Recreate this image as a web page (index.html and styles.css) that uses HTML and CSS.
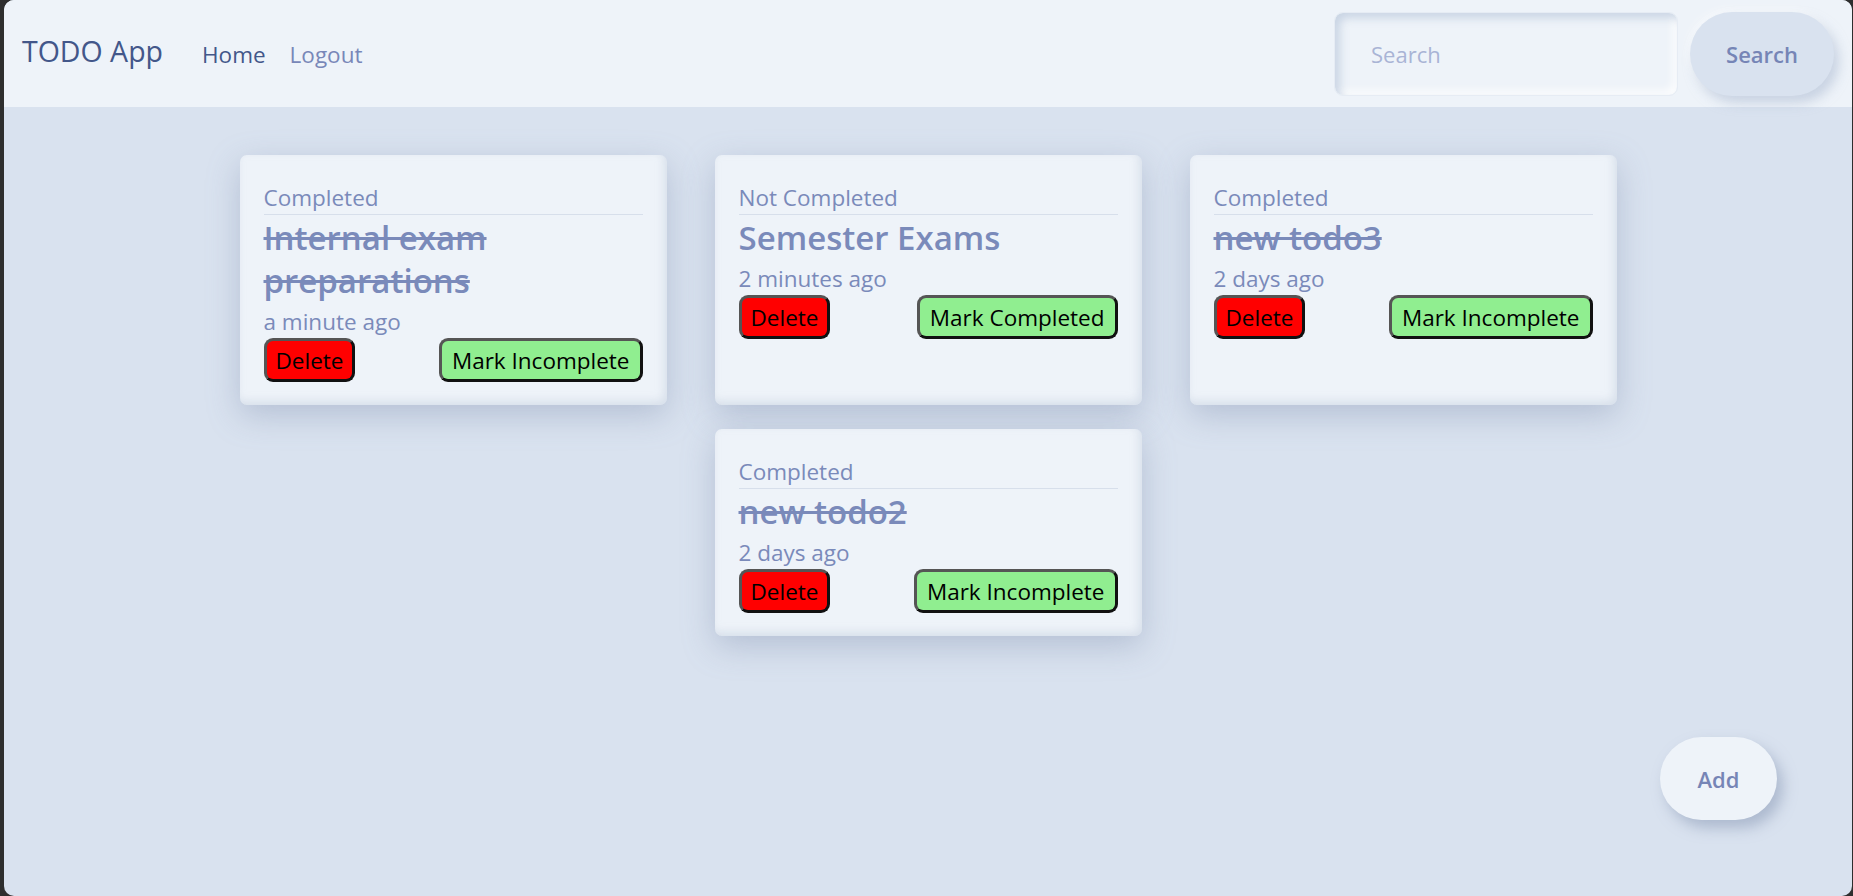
FILE: index.html
```html
<!DOCTYPE html>
<html lang="en">
<head>
<meta charset="utf-8">
<title>TODO App</title>
<link rel="stylesheet" href="styles.css">
</head>
<body>
<div class="window">
  <nav class="navbar">
    <a class="brand" href="#">TODO App</a>
    <div class="nav-links">
      <a class="nav-link active" href="#">Home</a>
      <a class="nav-link" href="#">Logout</a>
    </div>
    <form class="search">
      <input class="search-input" type="text" placeholder="Search">
      <button class="search-btn" type="button">Search</button>
    </form>
  </nav>
  <main class="todos">
    <div class="card">
      <div class="status">Completed</div>
      <div class="title done">Internal exam preparations</div>
      <div class="time">a minute ago</div>
      <div class="actions">
        <button class="btn btn-delete" type="button">Delete</button>
        <button class="btn btn-toggle" type="button">Mark Incomplete</button>
      </div>
    </div>
    <div class="card">
      <div class="status">Not Completed</div>
      <div class="title">Semester Exams</div>
      <div class="time">2 minutes ago</div>
      <div class="actions">
        <button class="btn btn-delete" type="button">Delete</button>
        <button class="btn btn-toggle" type="button">Mark Completed</button>
      </div>
    </div>
    <div class="card">
      <div class="status">Completed</div>
      <div class="title done">new todo3</div>
      <div class="time">2 days ago</div>
      <div class="actions">
        <button class="btn btn-delete" type="button">Delete</button>
        <button class="btn btn-toggle" type="button">Mark Incomplete</button>
      </div>
    </div>
    <div class="card">
      <div class="status">Completed</div>
      <div class="title done">new todo2</div>
      <div class="time">2 days ago</div>
      <div class="actions">
        <button class="btn btn-delete" type="button">Delete</button>
        <button class="btn btn-toggle" type="button">Mark Incomplete</button>
      </div>
    </div>
  </main>
  <button class="add-btn" type="button">Add</button>
</div>
</body>
</html>
```

FILE: styles.css
```css
html, body {
  margin: 0;
  padding: 0;
  height: 100%;
}
body {
  background: #2e2e2e;
  font-family: "Open Sans", "Noto Sans", sans-serif;
  overflow: hidden;
}
.window {
  position: relative;
  margin-left: 4px;
  width: 1848px;
  height: 896px;
  background: #d9e2ef;
  border-radius: 10px;
  overflow: hidden;
}
.navbar {
  height: 107px;
  box-sizing: border-box;
  background: #eef3f9;
  display: flex;
  align-items: center;
  padding: 0 18px 0 18px;
}
.brand {
  font-size: 28.5px;
  color: #43578a;
  text-decoration: none;
  margin-right: 35px;
  line-height: 1;
  padding-bottom: 4px;
}
.nav-links {
  display: flex;
  gap: 16px;
  padding-top: 1px;
}
.nav-link {
  font-size: 22.5px;
  color: #7887b8;
  text-decoration: none;
  padding: 0 4px;
}
.nav-link.active {
  color: #43578a;
}
.search {
  margin-left: auto;
  display: flex;
  gap: 12px;
  align-items: center;
}
.search-input {
  width: 344px;
  height: 84px;
  box-sizing: border-box;
  border: 1px solid #e6ecf4;
  border-radius: 9px;
  background: #eef3f9;
  box-shadow: inset 5px 5px 9px rgba(190, 203, 222, 0.75), inset -4px -4px 8px rgba(255, 255, 255, 0.9);
  padding: 0 36px;
  font-family: inherit;
  font-size: 22px;
  color: #7887b8;
  outline: none;
}
.search-input::placeholder {
  color: #a9b4d5;
}
.search-btn {
  width: 144px;
  height: 84px;
  border: none;
  border-radius: 42px;
  background: #d9e2ef;
  box-shadow: 5px 7px 12px rgba(170, 184, 208, 0.55), -3px -3px 8px rgba(255, 255, 255, 0.5);
  font-family: inherit;
  font-size: 22px;
  font-weight: 600;
  color: #7685b6;
  cursor: pointer;
}
.todos {
  display: flex;
  flex-wrap: wrap;
  justify-content: center;
  column-gap: 48px;
  row-gap: 24px;
  padding-top: 48px;
}
.card {
  width: 427px;
  box-sizing: border-box;
  background: #eef3f9;
  border-radius: 7px;
  padding: 27px 24px 23px 24px;
  box-shadow: 0 10px 32px rgba(120, 138, 168, 0.38), inset -3px -4px 9px rgba(175, 188, 208, 0.35);
  color: #7a8aba;
}
.status {
  font-size: 22.5px;
  line-height: 32px;
  border-bottom: 1px solid #d7dfeb;
}
.title {
  font-size: 33px;
  font-weight: 600;
  line-height: 43px;
  margin-top: 1px;
}
.title.done {
  text-decoration: line-through;
}
.time {
  font-size: 22.5px;
  line-height: 32px;
  margin-top: 4px;
}
.actions {
  display: flex;
  justify-content: space-between;
  margin-top: 0;
}
.btn {
  height: 44px;
  box-sizing: border-box;
  border: 3px solid;
  border-color: #555 #111 #111 #555;
  border-radius: 9px;
  padding: 0 9px;
  font-family: inherit;
  font-size: 22.5px;
  color: #000;
  cursor: pointer;
}
.btn-toggle {
  padding: 0 10px;
}
.btn-delete {
  background: #ff0000;
}
.btn-toggle {
  background: #90ee90;
}
.add-btn {
  position: absolute;
  right: 75px;
  bottom: 76px;
  width: 117px;
  height: 83px;
  border: none;
  border-radius: 42px;
  background: #eef3f9;
  box-shadow: 6px 8px 14px rgba(130, 146, 175, 0.5);
  font-family: inherit;
  font-size: 22px;
  font-weight: 600;
  color: #7685b6;
  cursor: pointer;
}
```
